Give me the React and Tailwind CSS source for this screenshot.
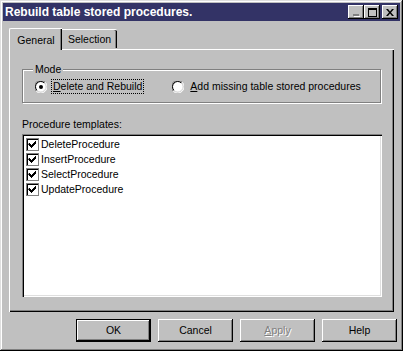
import React from 'react';

const font = { fontFamily: '"Liberation Sans", Arial, sans-serif' };

const raised = 'shadow-[inset_-1px_-1px_#000,inset_1px_1px_#fff,inset_-2px_-2px_#808080]';

const TitleButton = ({ children, className = '' }) => (
    <div className={`w-[16px] h-[14px] bg-[#c0c0c0] flex items-center justify-center ${raised} ${className}`}>
        {children}
    </div>
);

const Radio = ({ checked }) => (
    <svg width="12" height="12" viewBox="0 0 12 12" className="shrink-0">
        <circle cx="6" cy="6" r="5" fill="#fff" />
        <path d="M1.2 10.2 A5.5 5.5 0 0 1 10.2 1.2" fill="none" stroke="#808080" strokeWidth="1" />
        <path d="M10.2 1.2 A5.5 5.5 0 0 1 1.2 10.2" fill="none" stroke="#fff" strokeWidth="1" />
        <path d="M2 9.4 A4.5 4.5 0 0 1 9.4 2" fill="none" stroke="#000" strokeWidth="1" />
        <path d="M9.4 2 A4.5 4.5 0 0 1 2 9.4" fill="none" stroke="#dfdfdf" strokeWidth="1" />
        {checked && <circle cx="6" cy="6" r="2" fill="#000" />}
    </svg>
);

const Check = () => (
    <svg width="13" height="13" viewBox="0 0 13 13" className="shrink-0">
        <rect x="0" y="0" width="13" height="13" fill="#808080" />
        <rect x="1" y="1" width="11" height="11" fill="#000" />
        <rect x="2" y="2" width="10" height="10" fill="#fff" />
        <path d="M3 5h1v1h1v1h1v-1h1v-1h1v-1h1v-1h1v3h-1v1h-1v1h-1v1h-1v1h-1v-1h-1v-1h-1v-1h-1z" fill="#000" />
    </svg>
);

const Button = ({ children, isDefault, disabled }) => (
    <div
        className={`w-[75px] h-[23px] flex items-center justify-center text-[10.5px] bg-[#c0c0c0] ${
            isDefault
                ? 'shadow-[inset_-1px_-1px_#000,inset_1px_1px_#000,inset_-2px_-2px_#000,inset_2px_2px_#fff,inset_-3px_-3px_#808080]'
                : raised
        } ${disabled ? 'text-[#808080] [text-shadow:1px_1px_#fff]' : 'text-black'}`}
    >
        {children}
    </div>
);

const templates = ['DeleteProcedure', 'InsertProcedure', 'SelectProcedure', 'UpdateProcedure'];

export default function App() {
    return (
        <div
            className="w-[403px] h-[351px] bg-[#c0c0c0] p-[3px] flex flex-col shadow-[inset_-1px_-1px_#000,inset_1px_1px_#dfdfdf,inset_-2px_-2px_#808080,inset_2px_2px_#fff]"
            style={font}
        >
            {/* Title bar */}
            <div className="h-[18px] bg-[#333366] flex items-center pl-[2px] pr-[2px]">
                <span className="text-white font-bold text-[12px] leading-none flex-1">Rebuild table stored procedures.</span>
                <TitleButton>
                    <svg width="8" height="10" viewBox="0 0 8 10">
                        <rect x="1" y="7" width="6" height="2" fill="#808080" />
                        <rect x="2" y="9" width="6" height="1" fill="#fff" />
                    </svg>
                </TitleButton>
                <TitleButton>
                    <svg width="9" height="9" viewBox="0 0 9 9">
                        <path d="M0 0h9v9h-9zM1 2v6h7v-6z" fill="#000" />
                    </svg>
                </TitleButton>
                <TitleButton className="ml-[2px]">
                    <svg width="8" height="7" viewBox="0 0 8 7">
                        <path d="M0 0h2l2 2.5 2-2.5h2l-3 3.5 3 3.5h-2l-2-2.5-2 2.5h-2l3-3.5z" fill="#000" />
                    </svg>
                </TitleButton>
            </div>

            {/* Tabs */}
            <div className="mt-[6px] ml-[6px] flex items-end h-[22px] relative z-10">
                <div className="h-[22px] w-[53px] bg-[#c0c0c0] border-l border-t border-white rounded-tl-[2px] shadow-[inset_-1px_0_#000,inset_-2px_0_#808080] flex items-start justify-center pt-[4px] text-[10.5px] -mb-px">
                    General
                </div>
                <div className="h-[19px] w-[55px] border-t border-white rounded-tr-[2px] shadow-[inset_-1px_0_#000,inset_-2px_0_#808080] flex items-start justify-center pt-[2px] text-[10.5px] mb-px">
                    Selection
                </div>
            </div>

            {/* Tab panel */}
            <div className="ml-[6px] w-[385px] h-[263px] border-l border-t border-white shadow-[inset_-1px_-1px_#000,inset_-2px_-2px_#808080] pt-[19px] pl-[12px] text-[10.5px] text-black">
                <div className="relative w-[359px] h-[34px] border border-[#808080] shadow-[1px_1px_#fff,inset_1px_1px_#fff] flex items-center pt-[1px]">
                    <span className="absolute -top-[8px] left-[10px] px-[2px] bg-[#c0c0c0]">Mode</span>
                    <div className="flex items-center ml-[12px]">
                        <Radio checked />
                        <span className="ml-[5px] px-[1px] outline-1 outline-dotted outline-black leading-[13px]">
                            <span className="underline">D</span>elete and Rebuild
                        </span>
                    </div>
                    <div className="flex items-center ml-[29px]">
                        <Radio />
                        <span className="ml-[6px]">
                            <span className="underline">A</span>dd missing table stored procedures
                        </span>
                    </div>
                </div>

                <div className="mt-[15px] leading-[13px]">Procedure templates:</div>

                <div className="mt-[3px] w-[360px] h-[163px] bg-white shadow-[inset_1px_1px_#808080,inset_2px_2px_#000,inset_-1px_-1px_#fff,inset_-2px_-2px_#dfdfdf] pt-[3px] pl-[4px]">
                    {templates.map((t) => (
                        <div key={t} className="flex items-center h-[15px]">
                            <Check />
                            <span className="ml-[2px]">{t}</span>
                        </div>
                    ))}
                </div>
            </div>

            {/* Buttons */}
            <div className="mt-[7px] flex gap-[7px] pl-[73px]">
                <Button isDefault>OK</Button>
                <Button>Cancel</Button>
                <Button disabled>
                    <span className="underline">A</span>pply
                </Button>
                <Button>Help</Button>
            </div>
        </div>
    );
}
